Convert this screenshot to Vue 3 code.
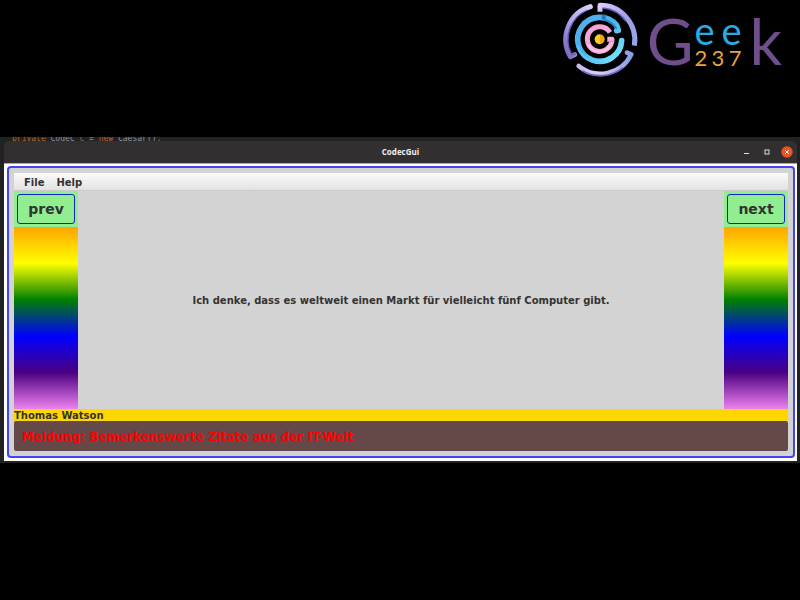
<script setup>
import { ref, computed } from 'vue'

const quotes = [
  { text: 'Ich denke, dass es weltweit einen Markt für vielleicht fünf Computer gibt.', author: 'Thomas Watson' },
]
const index = ref(0)
const quote = computed(() => quotes[index.value])
const step = (n) => {
  index.value = (index.value + n + quotes.length) % quotes.length
}
</script>

<template>
  <div class="page">
    <header class="brand">
      <svg class="emblem" viewBox="0 0 270 240" aria-hidden="true">
        <defs>
          <linearGradient id="left" x1="0" y1="1" x2="1" y2="0">
            <stop offset="0" stop-color="#7466bd" />
            <stop offset="0.5" stop-color="#b9a9ee" />
            <stop offset="1" stop-color="#d8d2fa" />
          </linearGradient>
          <linearGradient id="right" x1="0" y1="0" x2="1" y2="1">
            <stop offset="0" stop-color="#dccbfb" />
            <stop offset="0.5" stop-color="#a3a0e8" />
            <stop offset="1" stop-color="#93a6ea" />
          </linearGradient>
          <linearGradient id="bottom" x1="0" y1="0" x2="1" y2="0">
            <stop offset="0" stop-color="#cabaf2" />
            <stop offset="0.4" stop-color="#d7cff8" />
            <stop offset="1" stop-color="#8b9be6" />
          </linearGradient>
          <linearGradient id="blue" x1="0" y1="0" x2="1" y2="1">
            <stop offset="0" stop-color="#58a9ee" />
            <stop offset="0.45" stop-color="#49b4ef" />
            <stop offset="1" stop-color="#7fe9ff" />
          </linearGradient>
          <linearGradient id="pink" x1="0" y1="0" x2="1" y2="1">
            <stop offset="0" stop-color="#f3a0dc" />
            <stop offset="1" stop-color="#f7b4d8" />
          </linearGradient>
          <linearGradient id="gold" x1="0" y1="0" x2="1" y2="0">
            <stop offset="0.5" stop-color="#ffc928" />
            <stop offset="0.5" stop-color="#f8a313" />
          </linearGradient>
        </defs>
        <g fill="none" stroke-linejoin="round">
          <path d="M106 20A103 103 0 0 0 46 170L59 164" stroke="url(#left)" stroke-width="15" stroke-linecap="round" />
          <path d="M98 30A96 96 0 0 0 50 164L62 162" stroke="#6558ad" stroke-width="4" />
          <path d="M135 35V16A104 104 0 0 1 238 137" stroke="url(#right)" stroke-width="15" />
          <path d="M143 24A95 95 0 0 1 213 64" stroke="#685bb8" stroke-width="5" />
          <path d="M71 198A103 103 0 0 0 229 163L216 158" stroke="url(#bottom)" stroke-width="14" stroke-linecap="round" />
          <path d="M81 212A108 108 0 0 0 204 203" stroke="#7264bd" stroke-width="5" />
          <path d="M185 92L190 91L185 76A66 66 0 1 0 200 122" stroke="url(#blue)" stroke-width="17" stroke-linecap="round" />
          <path d="M68 137A69 69 0 0 0 149 187" stroke="#5fc9f5" stroke-width="5" />
          <path d="M185 86L177 76A60 60 0 0 0 146 59" stroke="#3383cb" stroke-width="5" />
          <path d="M146 44V58" stroke="#2c73bd" stroke-width="12" />
          <path d="M165 97A37 37 0 1 0 171 118H157" stroke="url(#pink)" stroke-width="15" />
          <path d="M100 133A37 37 0 0 0 163 140" stroke="#fac6ed" stroke-width="5" />
          <path d="M157 124H178" stroke="#dc82b8" stroke-width="3" />
        </g>
        <circle cx="134" cy="118" r="15" fill="url(#gold)" />
      </svg>
      <div class="wordmark">
        <span class="big">G</span>
        <span class="stack">
          <span class="row ee"><span>e</span><span>e</span></span>
          <span class="row num"><span>2</span><span>3</span><span>7</span></span>
        </span>
        <span class="big">k</span>
      </div>
    </header>

    <main class="desktop">
      <div class="code"><b>private</b> Codec <i>c</i> = <b>new</b> Caesar()<b>;</b></div>
      <section class="window">
        <div class="titlebar">
          <h1>CodecGui</h1>
          <div class="controls">
            <button aria-label="Minimize"><svg viewBox="0 0 12 12"><path d="M3 7.500H8" stroke="#ddd" /></svg></button>
            <button aria-label="Maximize"><svg viewBox="0 0 12 12"><rect x="4" y="4" width="4" height="4" fill="none" stroke="#ddd" /></svg></button>
            <button aria-label="Close"><svg viewBox="0 0 12 12"><circle cx="6" cy="6" r="5.700" fill="#e95420" /><path d="M4 4L8 8M8 4L4 8" stroke="#fff" /></svg></button>
          </div>
        </div>
        <div class="root">
          <div class="frame">
            <nav class="menubar">
              <button>File</button>
              <button>Help</button>
            </nav>
            <div class="content">
              <div class="side">
                <div class="cell"><button class="nav" @click="step(-1)">prev</button></div>
                <div class="rainbow"></div>
              </div>
              <p class="quote">{{ quote.text }}</p>
              <div class="side">
                <div class="cell"><button class="nav" @click="step(1)">next</button></div>
                <div class="rainbow"></div>
              </div>
            </div>
            <div class="author">{{ quote.author }}</div>
            <div class="message">Meldung: Bemerkenswerte Zitate aus der IT-Welt</div>
          </div>
        </div>
      </section>
    </main>
  </div>
</template>

<style>
body {
  margin: 0;
  background: #000;
}
</style>

<style scoped>
* {
  box-sizing: border-box;
}
button {
  padding: 0;
  border: 0;
  background: none;
  font: inherit;
  color: inherit;
}
.page {
  font-family: "DejaVu Sans", sans-serif;
  font-weight: bold;
  color: #333;
}
.brand {
  display: flex;
  justify-content: flex-end;
  gap: 2px;
  height: 137px;
  padding-right: 18px;
}
.emblem {
  width: 90px;
  height: 80px;
}
.wordmark {
  display: flex;
  align-items: flex-start;
  height: 80px;
  font-family: Lato, sans-serif;
  font-weight: 400;
}
.big {
  font-size: 64px;
  line-height: 82px;
  color: #6f4e8c;
}
.stack {
  width: 47px;
  padding-top: 13px;
  margin: 0 8px 0 1px;
}
.row {
  display: flex;
  justify-content: space-between;
}
.ee {
  height: 35px;
  font-size: 38px;
  line-height: 35px;
  color: #29abe2;
}
.num {
  font-size: 22px;
  line-height: 20px;
  color: #e9a43a;
}
.desktop {
  padding: 0 3px 2px 4px;
  background: #222;
}
.code {
  height: 4px;
  padding-left: 8px;
  overflow: hidden;
  font: 8px/4px "DejaVu Sans Mono", monospace;
  color: #8d99a5;
  white-space: pre;
}
.code b {
  font-weight: 400;
  color: #b5682c;
}
.code i {
  font-style: normal;
  color: #85648a;
}
.window {
  border-radius: 5px 5px 0 0;
  overflow: hidden;
}
.titlebar {
  display: grid;
  grid-template-columns: 1fr auto 1fr;
  align-items: center;
  height: 22px;
  padding: 0 4px;
  background: #322f30;
  color: #eee;
}
h1 {
  grid-column: 2;
  margin: 0;
  font: bold 8px/12px "Open Sans", sans-serif;
}
.controls {
  display: flex;
  justify-content: flex-end;
  gap: 8px;
}
.controls button {
  width: 12px;
  height: 12px;
}
.controls svg {
  display: block;
  width: 12px;
  height: 12px;
}
.root {
  padding: 2px 2px 3px 3px;
  border-top: 1px solid #aaa;
  background: #fff;
}
.frame {
  padding: 5px;
  border: 2px solid #4643f0;
  border-radius: 4px;
  background: #d3d3d3;
}
.menubar {
  display: flex;
  gap: 12px;
  height: 18px;
  padding: 2px 10px 0;
  border-bottom: 1px solid #ccc;
  background: linear-gradient(#fbfbfb, #e2e2e2);
  font-size: 10px;
}
.content {
  display: flex;
  height: 218px;
}
.side {
  display: flex;
  flex-direction: column;
  width: 64px;
}
.cell {
  height: 36px;
  padding: 3px;
  background: #90ee90;
}
.nav {
  width: 100%;
  height: 30px;
  border: 1px solid #1420c8;
  border-radius: 3px;
  font-size: 14px;
}
.rainbow {
  flex: 1;
  background: linear-gradient(orange, yellow, green, blue, indigo, violet);
}
.quote {
  flex: 1;
  margin: 0;
  align-self: center;
  text-align: center;
  font-size: 10px;
}
.author {
  height: 12px;
  background: #ffd700;
  font-size: 10px;
  line-height: 14px;
}
.message {
  height: 30px;
  padding: 0 8px;
  border-radius: 2px;
  background: #654848;
  color: #f00;
  font-size: 12px;
  line-height: 32px;
}
</style>
